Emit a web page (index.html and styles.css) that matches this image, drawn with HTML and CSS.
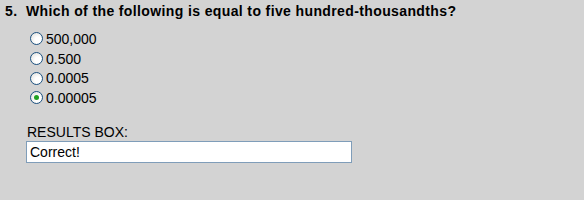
FILE: index.html
```html
<!DOCTYPE html>
<html lang="en">
<head>
    <meta charset="UTF-8">
    <title>Quiz - Question 5</title>
    <link rel="stylesheet" href="styles.css">
</head>
<body>
    <!-- Question -->
    <div class="question">
        <span class="num">5.</span>
        <span class="text">Which of the following is equal to five hundred-thousandths?</span>
    </div>

    <!-- Answers -->
    <ul class="answers">
        <li><label><input type="radio" name="q5" value="a"> 500,000</label></li>
        <li><label><input type="radio" name="q5" value="b"> 0.500</label></li>
        <li><label><input type="radio" name="q5" value="c"> 0.0005</label></li>
        <li><label><input type="radio" name="q5" value="d" checked> 0.00005</label></li>
    </ul>

    <!-- Results -->
    <div class="results">
        <div class="results-label">RESULTS BOX:</div>
        <input type="text" class="results-box" value="Correct!" readonly>
    </div>
</body>
</html>
```

FILE: styles.css
```css
body {
    font-family: "Liberation Sans", Arial, sans-serif;
    margin: 0;
    padding: 0;
    background-color: #d3d3d3;
    color: #000;
}
.question {
    display: flex;
    font-size: 14px;
    font-weight: bold;
    letter-spacing: 0.38px;
    line-height: 16px;
    padding: 3px 0 0 5px;
}
.question .num {
    width: 21px;
}
.answers {
    list-style: none;
    margin: 10px 0 0 0;
    padding: 0 0 0 30px;
    font-size: 14px;
}
.answers li {
    height: 19.7px;
    display: flex;
    align-items: center;
}
.answers label {
    display: flex;
    align-items: center;
}
.answers input {
    appearance: none;
    -webkit-appearance: none;
    width: 13px;
    height: 13px;
    margin: 0 3px 0 0;
    border: 1px solid #1c5180;
    border-radius: 50%;
    background: radial-gradient(circle at 65% 65%, #ffffff 30%, #dcdcd7 100%);
    box-sizing: border-box;
    display: grid;
    place-items: center;
}
.answers input:checked::after {
    content: "";
    width: 5px;
    height: 5px;
    border-radius: 50%;
    background: #21a121;
}
.results {
    margin-top: 16px;
    padding-left: 26px;
}
.results-label {
    font-size: 14px;
    line-height: 16px;
    padding-left: 1px;
    margin-bottom: 1px;
}
.results-box {
    display: block;
    width: 326px;
    height: 22px;
    box-sizing: border-box;
    margin: 0;
    padding: 1px 3px;
    border: 1px solid #7f9db9;
    background: #fff;
    font-family: "Liberation Sans", Arial, sans-serif;
    font-size: 14px;
    color: #000;
    outline: none;
}
```
